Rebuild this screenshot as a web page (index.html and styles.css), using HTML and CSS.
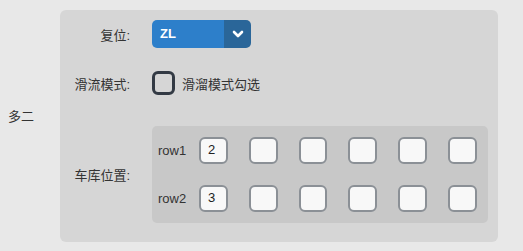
FILE: index.html
```html
<!DOCTYPE html>
<html>
<head>
<meta charset="utf-8">
<link rel="stylesheet" href="styles.css">
</head>
<body>
<div class="page">
  <div class="side-label">多二</div>
  <div class="panel">
    <div class="form-row row-reset">
      <div class="label">复位:</div>
      <div class="select">
        <span class="select-value">ZL</span>
        <span class="select-arrow">
          <svg width="12" height="8" viewBox="0 0 12 8"><path d="M2 2 L6 6 L10 2" fill="none" stroke="#fff" stroke-width="2.6" stroke-linecap="round" stroke-linejoin="round"/></svg>
        </span>
      </div>
    </div>
    <div class="form-row row-slide">
      <div class="label">滑流模式:</div>
      <label class="check">
        <span class="check-box"></span>
        <span class="check-text">滑溜模式勾选</span>
      </label>
    </div>
    <div class="form-row row-garage">
      <div class="label">车库位置:</div>
      <div class="garage">
        <div class="g-row">
          <span class="g-label">row1</span>
          <div class="cell">2</div><div class="cell"></div><div class="cell"></div><div class="cell"></div><div class="cell"></div><div class="cell"></div>
        </div>
        <div class="g-row">
          <span class="g-label">row2</span>
          <div class="cell">3</div><div class="cell"></div><div class="cell"></div><div class="cell"></div><div class="cell"></div><div class="cell"></div>
        </div>
      </div>
    </div>
  </div>
</div>
</body>
</html>
```

FILE: styles.css
```css
html, body {
  margin: 0;
  padding: 0;
  background: #e8e8e8;
  font-family: "Liberation Sans", "Noto Sans CJK SC", sans-serif;
  font-size: 13px;
  color: #333;
}
.page {
  display: flex;
  align-items: flex-start;
  width: 523px;
  height: 251px;
}
.side-label {
  width: 52px;
  padding-left: 8px;
  margin-top: 108px;
  line-height: 18px;
}
.panel {
  box-sizing: border-box;
  width: 438px;
  height: 232px;
  margin-top: 10px;
  background: #d6d6d6;
  border-radius: 6px;
  padding: 10px 0 20px 0;
  display: flex;
  flex-direction: column;
}
.form-row {
  display: flex;
  align-items: center;
}
.label {
  width: 70px;
  text-align: right;
  margin-right: 22px;
  white-space: nowrap;
}
.row-slide { margin-top: 23px; }
.row-garage { margin-top: 31px; }
.select {
  display: flex;
  width: 99px;
  height: 28px;
  border-radius: 5px;
  overflow: hidden;
}
.select-value {
  flex: 1;
  background: #2d7fca;
  color: #fff;
  font-weight: bold;
  line-height: 28px;
  padding-left: 8px;
}
.select-arrow {
  width: 27px;
  background: #2a6699;
  display: flex;
  align-items: center;
  justify-content: center;
}
.check {
  display: flex;
  align-items: center;
}
.check-box {
  box-sizing: border-box;
  width: 23px;
  height: 24px;
  border: 3px solid #333a44;
  border-radius: 6px;
  margin-right: 7px;
}
.garage {
  box-sizing: border-box;
  width: 336px;
  background: #c8c8c8;
  border-radius: 5px;
  padding: 11px 11px 11px 6px;
  display: flex;
  flex-direction: column;
  gap: 21px;
}
.g-row {
  display: flex;
  align-items: center;
  gap: 21px;
}
.g-label {
  width: 20px;
  font-size: 13px;
}
.cell {
  box-sizing: border-box;
  width: 29px;
  height: 27px;
  background: #f8f8f8;
  border: 2px solid #8b9096;
  border-radius: 6px;
  padding-left: 7px;
  line-height: 21px;
  font-size: 13px;
  color: #222;
}
```
